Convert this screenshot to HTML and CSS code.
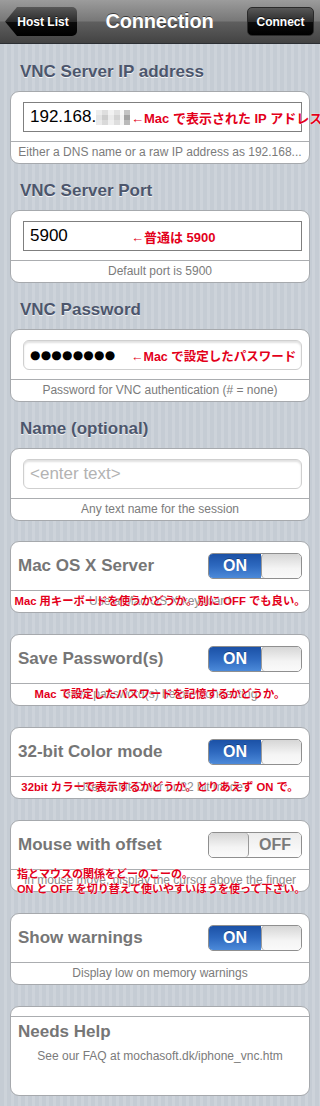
FILE: index.html
```html
<!DOCTYPE html>
<html lang="ja">
<head>
<meta charset="utf-8">
<title>Connection</title>
<link rel="stylesheet" href="styles.css">
</head>
<body>
<header class="nav">
  <a class="back">Host List</a>
  <h1 class="title">Connection</h1>
  <a class="btn">Connect</a>
</header>
<main class="content">
  <h2 class="sec first">VNC Server IP address</h2>
  <section class="card">
    <div class="field-row">
      <div class="field square"><span class="val">192.168.</span><span class="mosaic"></span><span class="note">←Mac で表示された IP アドレス</span></div>
    </div>
    <div class="foot">Either a DNS name or a raw IP address as 192.168...</div>
  </section>

  <h2 class="sec">VNC Server Port</h2>
  <section class="card">
    <div class="field-row">
      <div class="field square"><span class="val">5900</span><span class="note">←普通は 5900</span></div>
    </div>
    <div class="foot">Default port is 5900</div>
  </section>

  <h2 class="sec">VNC Password</h2>
  <section class="card">
    <div class="field-row">
      <div class="field round"><span class="val dots">●●●●●●●●</span><span class="note note-pw">←Mac で設定したパスワード</span></div>
    </div>
    <div class="foot">Password for VNC authentication (# = none)</div>
  </section>

  <h2 class="sec">Name (optional)</h2>
  <section class="card">
    <div class="field-row">
      <div class="field round"><span class="val placeholder">&lt;enter text&gt;</span></div>
    </div>
    <div class="foot">Any text name for the session</div>
  </section>

  <section class="card tcard gap-first">
    <div class="trow">
      <span class="tlabel">Mac OS X Server</span>
      <span class="switch"><span class="on">ON</span><span class="knob"></span></span>
    </div>
    <div class="foot tfoot">Use a Mac OS X keyboard<span class="anno">Mac 用キーボードを使うかどうか。別に OFF でも良い。</span></div>
  </section>

  <section class="card tcard">
    <div class="trow">
      <span class="tlabel">Save Password(s)</span>
      <span class="switch"><span class="on">ON</span><span class="knob"></span></span>
    </div>
    <div class="foot tfoot">Save password(s) before connecting<span class="anno">Mac で設定したパスワードを記憶するかどうか。</span></div>
  </section>

  <section class="card tcard">
    <div class="trow">
      <span class="tlabel">32-bit Color mode</span>
      <span class="switch"><span class="on">ON</span><span class="knob"></span></span>
    </div>
    <div class="foot tfoot">Use 16 bit Color or 32 bit mode<span class="anno">32bit カラーで表示するかどうか。とりあえず ON で。</span></div>
  </section>

  <section class="card tcard">
    <div class="trow">
      <span class="tlabel">Mouse with offset</span>
      <span class="switch"><span class="knob knob-left"></span><span class="off">OFF</span></span>
    </div>
    <div class="foot tfoot">In mouse move, display the cursor above the finger<span class="anno anno-two">指とマウスの関係をどーのこーの。<br>ON と OFF を切り替えて使いやすいほうを使って下さい。</span></div>
  </section>

  <section class="card tcard">
    <div class="trow">
      <span class="tlabel">Show warnings</span>
      <span class="switch"><span class="on">ON</span><span class="knob"></span></span>
    </div>
    <div class="foot">Display low on memory warnings</div>
  </section>

  <section class="card tcard help">
    <div class="help-top"></div>
    <div class="help-body">
      <div class="help-title">Needs Help</div>
      <div class="help-text">See our FAQ at mochasoft.dk/iphone_vnc.htm</div>
    </div>
  </section>
</main>
</body>
</html>
```

FILE: styles.css
```css
* { box-sizing: border-box; }
html, body { margin: 0; padding: 0; }
body {
  width: 320px;
  height: 1106px;
  overflow: hidden;
  font-family: "Liberation Sans", Arial, "Noto Sans CJK JP", sans-serif;
  background: repeating-linear-gradient(90deg, #c5ccd4 0 4px, #cdd3da 4px 7px);
}

/* nav bar */
.nav {
  height: 44px;
  display: grid;
  grid-template-columns: 1fr auto 1fr;
  align-items: center;
  padding: 0 6px 0 5px;
  background: linear-gradient(#9c9c9c 0%, #787878 48%, #5e5e5e 52%, #434343 100%);
  border-bottom: 1px solid #2c2f33;
}
.back, .btn {
  height: 29px;
  display: flex;
  align-items: center;
  justify-content: center;
  color: #fff;
  font-weight: bold;
  font-size: 12px;
  text-shadow: 0 -1px 0 rgba(0,0,0,.6);
  background: linear-gradient(#585858 0%, #2c2c2c 50%, #0c0c0c 52%, #000 100%);
}
.back {
  justify-self: start;
  width: 72px;
  padding-left: 4px;
  border-radius: 5px;
  clip-path: polygon(0 50%, 12px 0, 100% 0, 100% 100%, 12px 100%);
}
.btn {
  justify-self: end;
  width: 67px;
  border-radius: 5px;
  border: 1px solid #2a2a2a;
}
.title {
  margin: 0;
  color: #fff;
  font-size: 20px;
  font-weight: bold;
  text-shadow: 0 -1px 0 rgba(0,0,0,.55);
  letter-spacing: -0.2px;
}

/* content */
.content { padding: 0 10px 10px; }
.sec {
  margin: 17px 0 9px;
  padding-left: 10px;
  height: 20px;
  line-height: 20px;
  font-size: 17px;
  font-weight: bold;
  color: #4c566c;
  text-shadow: 0 1px 0 rgba(255,255,255,.8);
}
.sec.first { margin-top: 18px; }

.card {
  background: #fff;
  border: 1px solid #a6a9ad;
  border-radius: 9px;
}
.field-row {
  height: 50px;
  padding: 10px 7px 9px 12px;
  border-bottom: 1px solid #abadb0;
}
.field {
  position: relative;
  height: 30px;
  display: flex;
  align-items: center;
  padding-left: 6px;
  white-space: nowrap;
  font-size: 17px;
  color: #000;
}
.field.square { border: 1px solid #7f7f7f; }
.field.round {
  border: 1px solid #cfcfcf;
  border-radius: 6px;
  box-shadow: inset 0 2px 2px rgba(0,0,0,.12);
}
.val.placeholder { color: #b3b3b3; }
.val.dots {
  font-family: "DejaVu Sans", sans-serif;
  font-size: 12px;
  letter-spacing: 0.2px;
}
.mosaic {
  display: inline-block;
  width: 34px;
  height: 15px;
  background:
    linear-gradient(180deg, rgba(255,255,255,.35) 0 5px, rgba(0,0,0,0) 5px 10px, rgba(255,255,255,.25) 10px 15px),
    linear-gradient(90deg, #e4e4e4 0 6px, #cdcdcd 6px 12px, #ebebeb 12px 18px, #d3d3d3 18px 24px, #f2f2f2 24px 28px, #a3a3a3 28px 34px);
}

.note, .anno {
  font-family: "Liberation Sans", "Noto Sans CJK JP", sans-serif;
  font-weight: bold;
  color: #e3001b;
  text-shadow: 0 0 1px #fff, 0 0 1px #fff;
}
.note {
  position: absolute;
  left: 107px;
  font-size: 13px;
}
.note.note-pw { font-size: 12.5px; }

.foot {
  position: relative;
  height: 21px;
  line-height: 21px;
  text-align: center;
  font-size: 12px;
  color: #7b7b7b;
  white-space: nowrap;
}
.tfoot { color: #8c8c8c; }
.anno {
  position: absolute;
  inset: 0;
  display: flex;
  align-items: center;
  justify-content: center;
  font-size: 11.3px;
  line-height: 15px;
  white-space: nowrap;
}
.anno-two {
  display: block;
  text-align: left;
  padding-left: 6px;
  top: -3px;
  bottom: auto;
  font-size: 11px;
}

/* toggle cards */
.tcard { margin-top: 21px; }
.tcard.gap-first { margin-top: 20px; }
.trow {
  height: 49px;
  display: flex;
  align-items: center;
  justify-content: space-between;
  padding: 0 7px 0 7px;
  border-bottom: 1px solid #abadb0;
}
.tlabel {
  font-size: 17px;
  font-weight: bold;
  color: #767676;
}
.switch {
  display: flex;
  width: 94px;
  height: 26px;
  border: 1px solid #8f8f8f;
  border-radius: 5px;
  overflow: hidden;
}
.switch .on {
  flex: 1;
  display: flex;
  align-items: center;
  justify-content: center;
  color: #fff;
  font-size: 16px;
  font-weight: bold;
  text-shadow: 0 -1px 0 rgba(0,0,0,.3);
  background: linear-gradient(#1b51a6 0%, #2e69bf 50%, #4c8ad9 100%);
}
.switch .off {
  flex: 1;
  display: flex;
  align-items: center;
  justify-content: center;
  color: #7a7a7a;
  font-size: 16px;
  font-weight: bold;
  background: linear-gradient(#ececec, #fdfdfd);
}
.knob {
  width: 40px;
  border-left: 1px solid #999;
  border-radius: 4px;
  background: linear-gradient(#d6d6d6, #f4f4f4 60%, #fafafa);
}
.knob.knob-left {
  border-left: 0;
  border-right: 1px solid #999;
}

/* help card */
.help-top {
  height: 10px;
  border-bottom: 1px solid #abadb0;
}
.help-body {
  height: 78px;
  padding-top: 5px;
}
.help-title {
  padding-left: 7px;
  height: 20px;
  line-height: 20px;
  font-size: 17px;
  font-weight: bold;
  color: #767676;
}
.help-text {
  margin-top: 7px;
  height: 15px;
  line-height: 15px;
  text-align: center;
  font-size: 12px;
  color: #7b7b7b;
}
```
